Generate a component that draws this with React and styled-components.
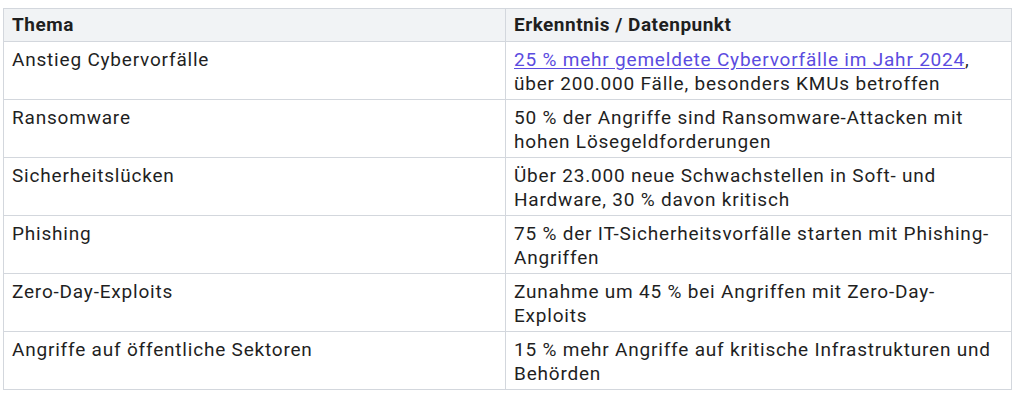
import React from "react";
import styled, { createGlobalStyle } from "styled-components";

const GlobalStyle = createGlobalStyle`
  body {
    margin: 0;
    background: #ffffff;
    font-family: Roboto, "Liberation Sans", Arial, sans-serif;
  }
`;

const Page = styled.div`
  padding: 8px 10px 0 3px;
`;

const Table = styled.table`
  width: 1009px;
  border-collapse: collapse;
  table-layout: fixed;
  font-size: 19px;
  line-height: 24px;
  letter-spacing: 0.8px;
  color: #1f1f1f;
`;

const Head = styled.th`
  background-color: #f1f3f5;
  border: 1px solid #d3d7dd;
  padding: 4px 8px;
  text-align: left;
  font-weight: 700;
  letter-spacing: 0.5px;
  width: ${(p) => p.$width};
`;

const Cell = styled.td`
  border: 1px solid #d3d7dd;
  padding: 6px 8px 3px;
  vertical-align: top;
  height: 48px;
`;

const SourceLink = styled.a`
  color: #5b4ce0;
  text-decoration: underline;
  text-underline-offset: 2px;
`;

const rows = [
  {
    topic: "Anstieg Cybervorfälle",
    finding: (
      <>
        <SourceLink href="#">25 % mehr gemeldete Cybervorfälle im Jahr 2024</SourceLink>,
        über 200.000 Fälle, besonders KMUs betroffen
      </>
    ),
  },
  {
    topic: "Ransomware",
    finding: "50 % der Angriffe sind Ransomware-Attacken mit hohen Lösegeldforderungen",
  },
  {
    topic: "Sicherheitslücken",
    finding: "Über 23.000 neue Schwachstellen in Soft- und Hardware, 30 % davon kritisch",
  },
  {
    topic: "Phishing",
    finding: "75 % der IT-Sicherheitsvorfälle starten mit Phishing-Angriffen",
  },
  {
    topic: "Zero-Day-Exploits",
    finding: "Zunahme um 45 % bei Angriffen mit Zero-Day-Exploits",
  },
  {
    topic: "Angriffe auf öffentliche Sektoren",
    finding: "15 % mehr Angriffe auf kritische Infrastrukturen und Behörden",
  },
];

const App = () => {
  return (
    <Page>
      <GlobalStyle />
      <Table>
        <thead>
          <tr>
            <Head $width="485px">Thema</Head>
            <Head>Erkenntnis / Datenpunkt</Head>
          </tr>
        </thead>
        <tbody>
          {rows.map((row) => (
            <tr key={row.topic}>
              <Cell>{row.topic}</Cell>
              <Cell>{row.finding}</Cell>
            </tr>
          ))}
        </tbody>
      </Table>
    </Page>
  );
};

export default App;
